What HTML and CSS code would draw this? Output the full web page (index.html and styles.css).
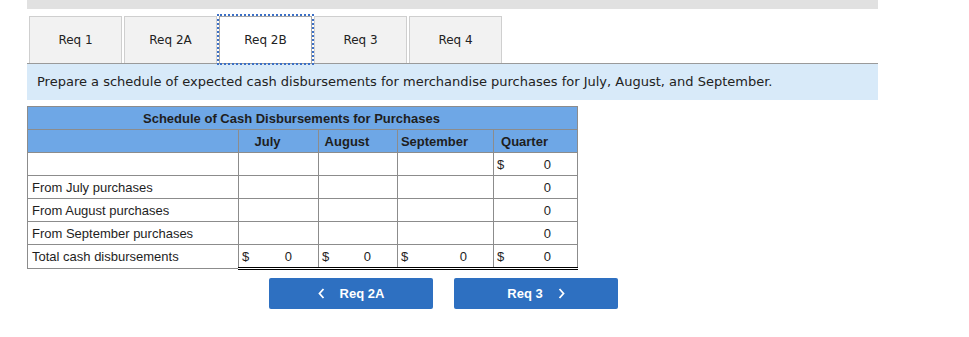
FILE: index.html
```html
<!DOCTYPE html>
<html lang="en">
<head>
    <meta charset="UTF-8">
    <title>Req 2B - Cash Disbursements</title>
    <link rel="stylesheet" href="styles.css">
</head>
<body>
    <div class="page">
        <div class="top-bar"></div>

        <!-- Onglets des exigences -->
        <div class="tabs">
            <div class="tab">Req 1</div>
            <div class="tab">Req 2A</div>
            <div class="tab active">Req 2B</div>
            <div class="tab">Req 3</div>
            <div class="tab">Req 4</div>
        </div>

        <div class="instructions">
            Prepare a schedule of expected cash disbursements for merchandise purchases for July, August, and September.
        </div>

        <!-- Tableau des décaissements -->
        <table class="schedule">
            <colgroup>
                <col class="c-label">
                <col class="c-july">
                <col class="c-aug">
                <col class="c-sep">
                <col class="c-qtr">
            </colgroup>
            <tr class="head">
                <th colspan="5">Schedule of Cash Disbursements for Purchases</th>
            </tr>
            <tr class="head">
                <th></th>
                <th>July</th>
                <th>August</th>
                <th>September</th>
                <th>Quarter</th>
            </tr>
            <tr>
                <td class="label"></td>
                <td></td>
                <td></td>
                <td></td>
                <td class="num"><span class="cur">$</span>0</td>
            </tr>
            <tr>
                <td class="label">From July purchases</td>
                <td></td>
                <td></td>
                <td></td>
                <td class="num">0</td>
            </tr>
            <tr>
                <td class="label">From August purchases</td>
                <td></td>
                <td></td>
                <td></td>
                <td class="num">0</td>
            </tr>
            <tr>
                <td class="label">From September purchases</td>
                <td></td>
                <td></td>
                <td></td>
                <td class="num">0</td>
            </tr>
            <tr class="total">
                <td class="label">Total cash disbursements</td>
                <td class="num"><span class="cur">$</span>0</td>
                <td class="num"><span class="cur">$</span>0</td>
                <td class="num"><span class="cur">$</span>0</td>
                <td class="num"><span class="cur">$</span>0</td>
            </tr>
        </table>

        <div class="nav">
            <button class="nav-btn">
                <svg class="chev" width="7" height="11" viewBox="0 0 7 11"><polyline points="5.5,1 1.5,5.5 5.5,10" fill="none" stroke="#fff" stroke-width="1.8"/></svg>
                Req 2A
            </button>
            <button class="nav-btn">
                Req 3
                <svg class="chev right" width="7" height="11" viewBox="0 0 7 11"><polyline points="1.5,1 5.5,5.5 1.5,10" fill="none" stroke="#fff" stroke-width="1.8"/></svg>
            </button>
        </div>
    </div>
</body>
</html>
```

FILE: styles.css
```css
body {
  margin: 0;
  background: #fff;
  color: #222;
}

.page {
  width: 851px;
  margin-left: 27px;
}

.top-bar {
  height: 9px;
  background: #e1e1e1;
}

/* Onglets */
.tabs {
  display: flex;
  gap: 2px;
  margin-top: 7px;
  padding-left: 2px;
  border-bottom: 1px solid #9a9a9a;
  font-family: "DejaVu Sans", Verdana, sans-serif;
  font-size: 12px;
}

.tab {
  width: 91px;
  height: 46px;
  line-height: 46px;
  text-align: center;
  background: #f2f2f2;
  border: 1px solid #cfcfcf;
  border-bottom: none;
  color: #222;
}

.tab.active {
  background: #fff;
  border-color: #a8a8a8;
  outline: 2px dotted #3b6fc6;
  outline-offset: 0;
}

.instructions {
  background: #d8eaf9;
  height: 36px;
  line-height: 36px;
  padding-left: 10px;
  font-family: "DejaVu Sans", Verdana, sans-serif;
  font-size: 13px;
  color: #222;
}

/* Tableau */
.schedule {
  margin-top: 6px;
  width: 550px;
  table-layout: fixed;
  border-collapse: collapse;
  font-family: "Liberation Sans", Arial, sans-serif;
  font-size: 13px;
  color: #1e1e1e;
  border: 1px solid #8c8c8c;
}

.c-label { width: 211px; }
.c-july { width: 80px; }
.c-aug { width: 79px; }
.c-sep { width: 96px; }
.c-qtr { width: 84px; }

.schedule th,
.schedule td {
  height: 22px;
  padding: 0;
  border: 1px solid #8c8c8c;
}

.schedule .head th {
  background: #6ea7e6;
  font-weight: bold;
  text-align: center;
  padding-right: 22px;
}

.schedule .label {
  padding-left: 4px;
  text-align: left;
}

.schedule td.num {
  text-align: right;
  padding-right: 26px;
  position: relative;
}

.cur {
  position: absolute;
  left: 3px;
}

.schedule .total td.num {
  border-top: 1px solid #000;
  border-bottom: 3px double #000;
}

/* Boutons de navigation */
.nav {
  display: flex;
  gap: 21px;
  margin-top: 8px;
  padding-left: 242px;
}

.nav-btn {
  display: flex;
  align-items: center;
  justify-content: center;
  width: 164px;
  height: 31px;
  background: #2e70c1;
  color: #fff;
  border: none;
  border-radius: 2px;
  font-family: "Liberation Sans", Arial, sans-serif;
  font-size: 13px;
  font-weight: bold;
  cursor: pointer;
}

.chev {
  margin-right: 15px;
}

.chev.right {
  margin-right: 0;
  margin-left: 15px;
}
```
